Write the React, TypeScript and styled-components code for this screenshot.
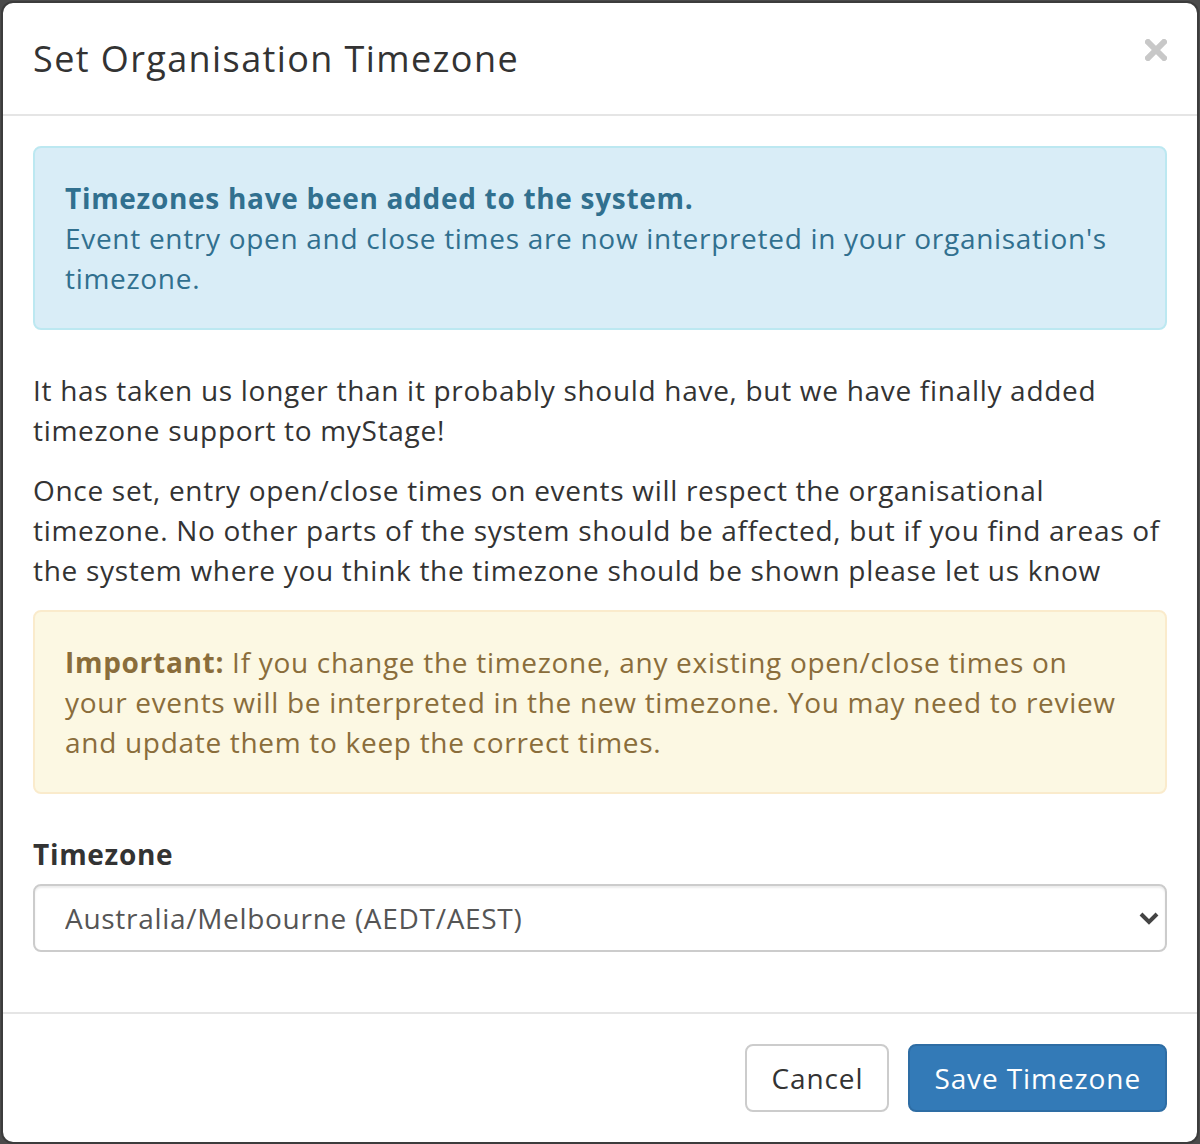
import React from 'react'
import styled, { createGlobalStyle } from 'styled-components'

const GlobalStyle = createGlobalStyle`
  html, body {
    margin: 0;
    padding: 0;
  }
  body {
    background: #4b4b4b;
    font-family: 'Open Sans', 'Liberation Sans', sans-serif;
    color: #333;
  }
  * {
    box-sizing: border-box;
  }
`

const Backdrop = styled.div`
  padding: 1px 1px 2px 1px;
  min-height: 1144px;
`

const Dialog = styled.div`
  background: #fff;
  border: 2px solid rgba(0, 0, 0, 0.2);
  border-radius: 12px;
  background-clip: padding-box;
  overflow: hidden;
`

const Header = styled.div`
  display: flex;
  align-items: center;
  justify-content: space-between;
  padding: 0 30px;
  height: 113px;
  border-bottom: 2px solid #e5e5e5;
`

const Title = styled.h4`
  margin: 0;
  font-size: 36px;
  font-weight: 500;
  line-height: 51px;
  color: #333;
  letter-spacing: 1.4px;
`

const Close = styled.button`
  border: 0;
  background: none;
  padding: 0;
  margin-top: -18px;
  width: 22px;
  height: 22px;
  cursor: pointer;
  display: flex;
`

const Body = styled.div`
  padding: 30px;
`

const Alert = styled.div<{ $tone: 'info' | 'warning' }>`
  padding: 30px;
  margin-bottom: 40px;
  border: 2px solid ${p => (p.$tone === 'info' ? '#bce8f1' : '#faebcc')};
  background: ${p => (p.$tone === 'info' ? '#d9edf7' : '#fcf8e3')};
  color: ${p => (p.$tone === 'info' ? '#31708f' : '#8a6d3b')};
  border-radius: 8px;
  font-size: 28px;
  line-height: 40px;
  letter-spacing: 0.7px;

  strong {
    font-weight: 700;
  }
`

const Text = styled.p`
  margin: 0 0 20px;
  font-size: 28px;
  line-height: 40px;
  letter-spacing: 0.7px;
`

const FormGroup = styled.div`
  margin-bottom: 30px;
`

const Label = styled.label`
  display: block;
  margin-bottom: 10px;
  font-size: 28px;
  line-height: 40px;
  font-weight: 700;
  letter-spacing: 0.7px;
`

const SelectWrap = styled.div`
  position: relative;
`

const Select = styled.select`
  display: block;
  width: 100%;
  height: 68px;
  padding: 0 24px 0 30px;
  font-family: inherit;
  font-size: 28px;
  letter-spacing: 0.7px;
  color: #555;
  background: #fff;
  border: 2px solid #ccc;
  border-radius: 8px;
  box-shadow: inset 0 2px 2px rgba(0, 0, 0, 0.075);
  appearance: none;
`

const Chevron = styled.svg`
  position: absolute;
  right: 8px;
  top: 27px;
  pointer-events: none;
`

const Footer = styled.div`
  display: flex;
  justify-content: flex-end;
  gap: 19px;
  padding: 30px;
  border-top: 2px solid #e5e5e5;
`

const Button = styled.button<{ $primary?: boolean }>`
  height: 68px;
  padding: 0 24px;
  font-family: inherit;
  font-size: 28px;
  letter-spacing: 0.9px;
  border-radius: 8px;
  border: 2px solid ${p => (p.$primary ? '#2e6da4' : '#ccc')};
  background: ${p => (p.$primary ? '#337ab7' : '#fff')};
  color: ${p => (p.$primary ? '#fff' : '#333')};
  cursor: pointer;
`

const App = () => {
  return (
    <>
      <GlobalStyle />
      <Backdrop>
        <Dialog>
          <Header>
            <Title>Set Organisation Timezone</Title>
            <Close aria-label='Close'>
              <svg width='22' height='22' viewBox='0 0 22 22'>
                <path d='M3 3 L19 19 M19 3 L3 19' stroke='#c8c8c8' strokeWidth='6' strokeLinecap='square' />
              </svg>
            </Close>
          </Header>
          <Body>
            <Alert $tone='info'>
              <strong>Timezones have been added to the system.</strong>
              <br />
              Event entry open and close times are now interpreted in your organisation's timezone.
            </Alert>
            <Text>
              It has taken us longer than it probably should have, but we have finally added timezone support to myStage!
            </Text>
            <Text>
              Once set, entry open/close times on events will respect the organisational timezone. No other parts of the
              system should be affected, but if you find areas of the system where you think the timezone should be shown
              please let us know
            </Text>
            <Alert $tone='warning'>
              <strong>Important:</strong> If you change the timezone, any existing open/close times on your events will be
              interpreted in the new timezone. You may need to review and update them to keep the correct times.
            </Alert>
            <FormGroup>
              <Label htmlFor='tz'>Timezone</Label>
              <SelectWrap>
                <Select id='tz' defaultValue='Australia/Melbourne'>
                  <option value='Australia/Melbourne'>Australia/Melbourne (AEDT/AEST)</option>
                  <option value='Australia/Sydney'>Australia/Sydney (AEDT/AEST)</option>
                  <option value='Australia/Brisbane'>Australia/Brisbane (AEST)</option>
                  <option value='Australia/Perth'>Australia/Perth (AWST)</option>
                </Select>
                <Chevron width='20' height='14' viewBox='0 0 20 14'>
                  <path d='M2 3 L10 11 L18 3' fill='none' stroke='#444' strokeWidth='4' />
                </Chevron>
              </SelectWrap>
            </FormGroup>
          </Body>
          <Footer>
            <Button>Cancel</Button>
            <Button $primary>Save Timezone</Button>
          </Footer>
        </Dialog>
      </Backdrop>
    </>
  )
}

export default App
